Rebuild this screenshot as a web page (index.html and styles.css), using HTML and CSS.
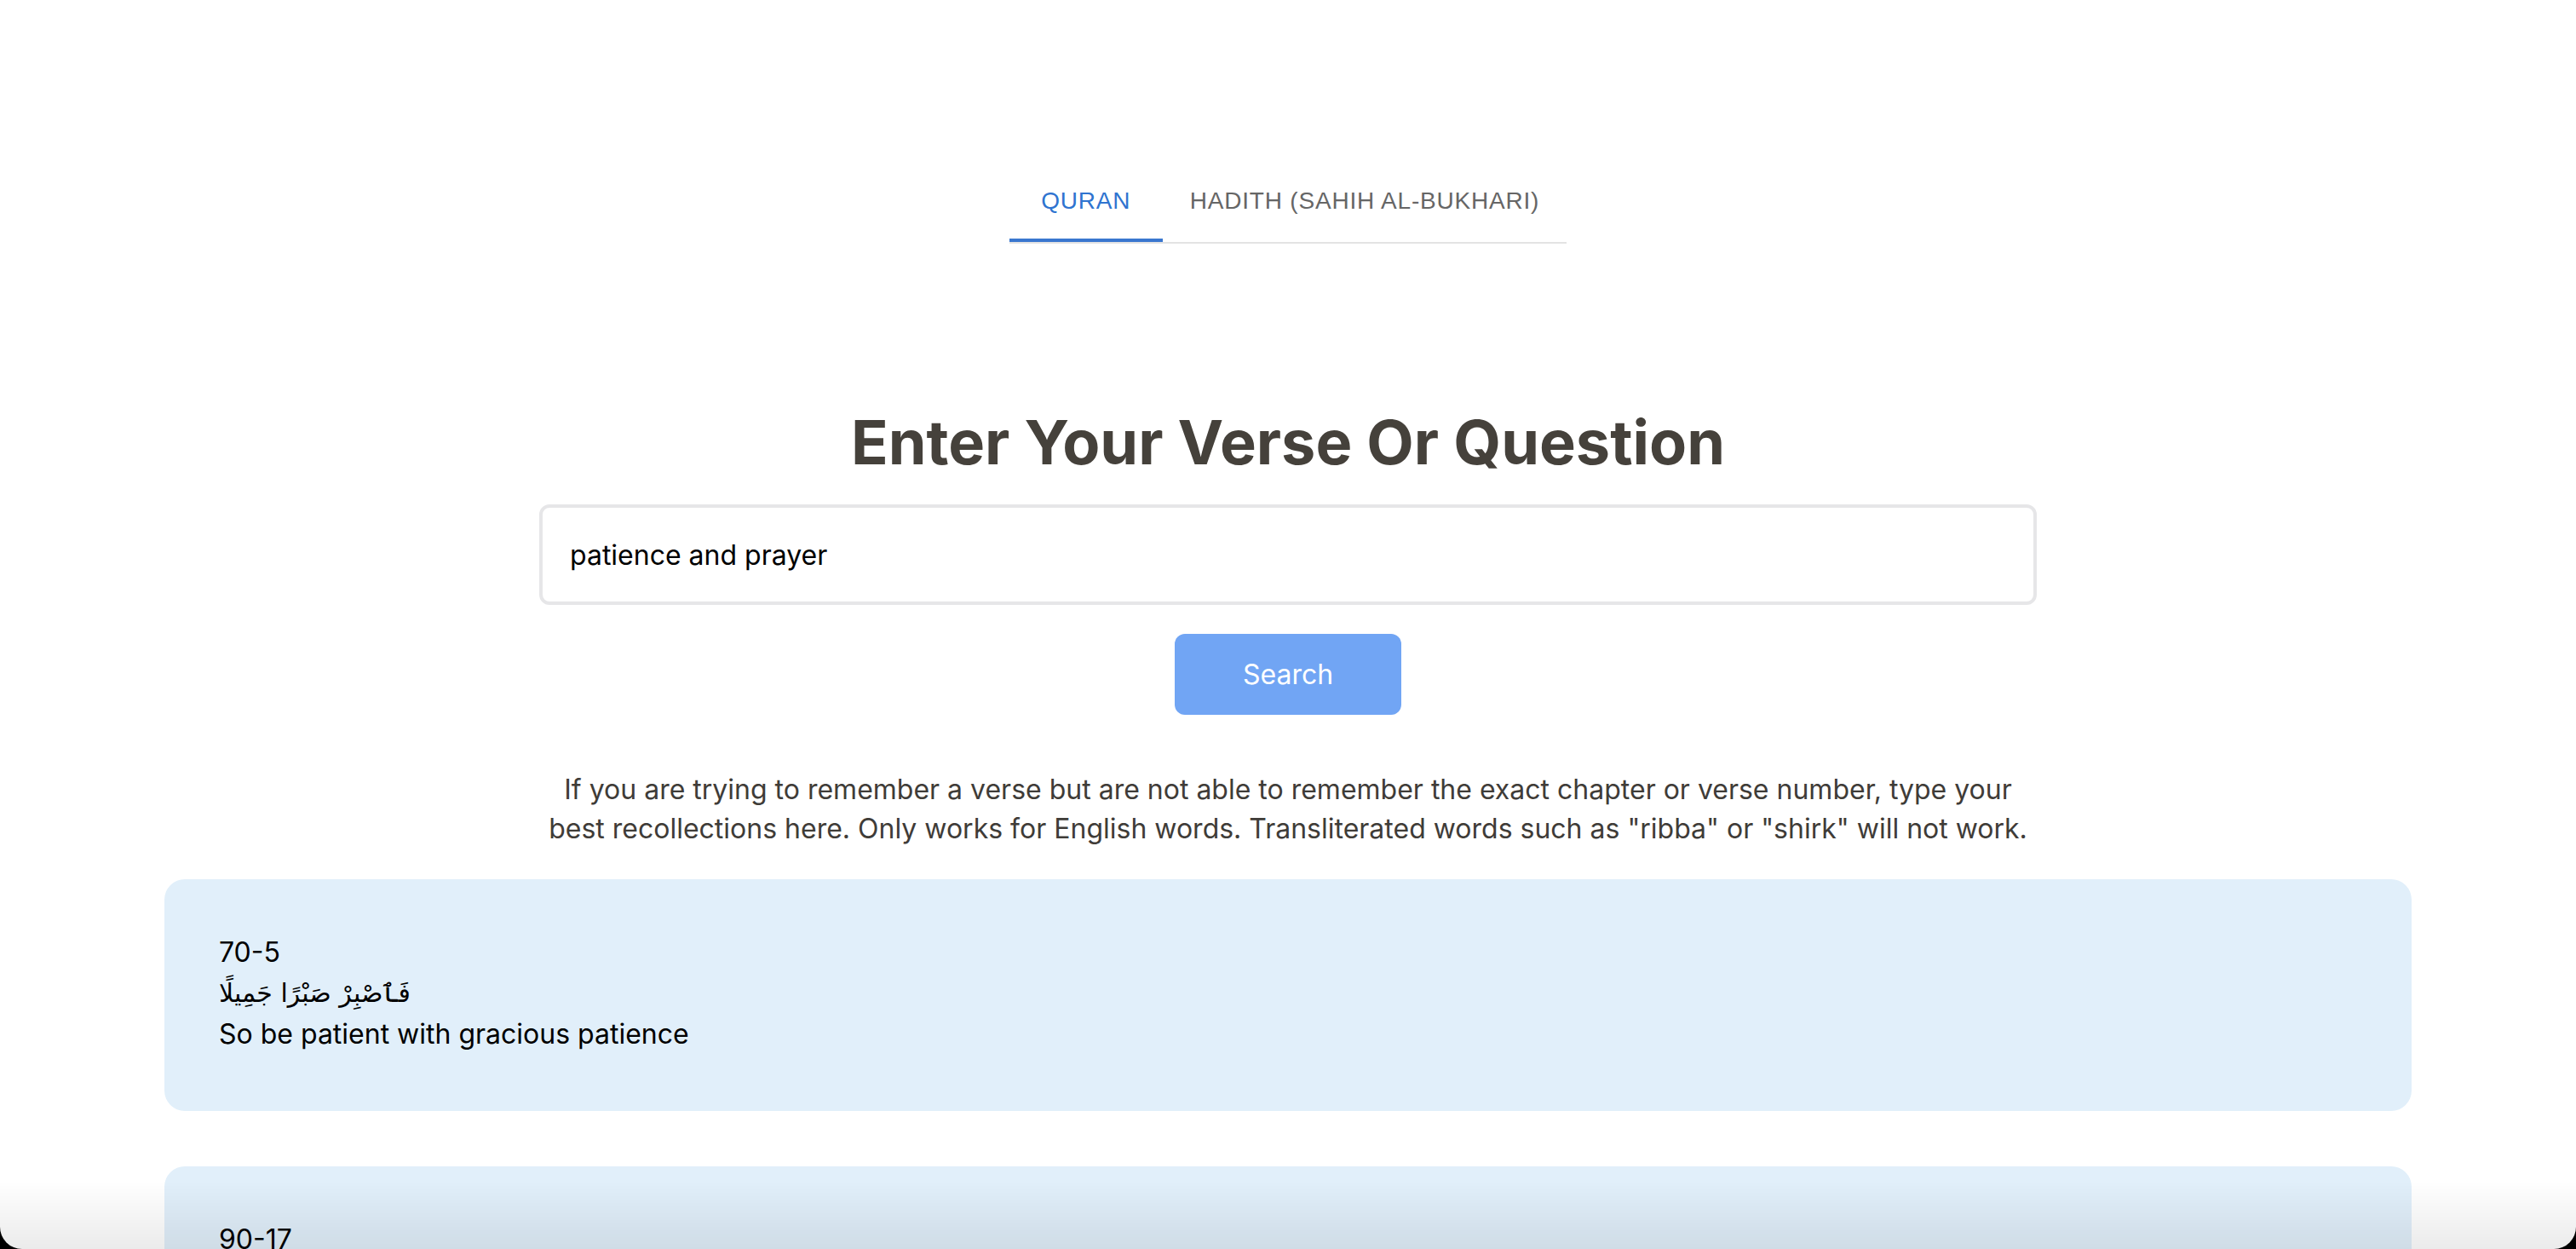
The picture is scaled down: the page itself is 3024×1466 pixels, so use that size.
FILE: index.html
```html
<!DOCTYPE html>
<html lang="en">
<head>
<meta charset="utf-8">
<title>Verse Search</title>
<link rel="stylesheet" href="styles.css">
</head>
<body>
<main class="page">
  <nav class="tabs">
    <button class="tab tab-active">Quran</button>
    <button class="tab">Hadith (Sahih Al-Bukhari)</button>
  </nav>

  <section class="search">
    <h1 class="title">Enter Your Verse Or Question</h1>
    <input class="query" type="text" value="patience and prayer">
    <button class="search-btn">Search</button>
    <p class="hint">If you are trying to remember a verse but are not able to remember the exact chapter or verse number, type your best recollections here. Only works for English words. Transliterated words such as "ribba" or "shirk" will not work.</p>
  </section>

  <section class="results">
    <article class="card">
      <div class="ref">70-5</div>
      <div class="arabic">فَٱصْبِرْ صَبْرًا جَمِيلًا</div>
      <div class="english">So be patient with gracious patience</div>
    </article>
    <article class="card">
      <div class="ref">90-17</div>
      <div class="arabic">ثُمَّ كَانَ مِنَ ٱلَّذِينَ ءَامَنُوا۟ وَتَوَاصَوْا۟ بِٱلصَّبْرِ وَتَوَاصَوْا۟ بِٱلْمَرْحَمَةِ</div>
      <div class="english">And then being among those who believed and advised one another to patience and advised one another to compassion</div>
    </article>
  </section>
</main>
<div class="window-frame"></div>
</body>
</html>
```

FILE: styles.css
```css
html {
  overflow: hidden;
  background: #fff;
}

body {
  margin: 0;
  font-family: Inter, "Noto Sans", "DejaVu Sans", sans-serif;
  color: #000;
  background: #fff;
}

.page {
  padding-top: 188px;
  display: flex;
  flex-direction: column;
  align-items: center;
}

/* Tabs */
.tabs {
  display: flex;
  border-bottom: 2px solid #e3e3e3;
}

.tab {
  min-width: 180px;
  height: 96px;
  padding: 4px 32px 0;
  margin: 0;
  border: 0;
  background: none;
  font-family: "Liberation Sans", Arial, sans-serif;
  font-size: 28px;
  font-weight: 400;
  letter-spacing: 0.8px;
  text-transform: uppercase;
  color: #666;
  box-sizing: border-box;
  border-bottom: 4px solid transparent;
}

.tab-active {
  color: #2f74d0;
  border-bottom-color: #3a77cf;
}

/* Search */
.search {
  width: 1758px;
  display: flex;
  flex-direction: column;
  align-items: center;
  margin-top: 189px;
}

.title {
  margin: 0;
  font-size: 72px;
  line-height: 88px;
  font-weight: 700;
  color: #45413b;
}

.query {
  margin-top: 29px;
  width: 100%;
  height: 118px;
  box-sizing: border-box;
  border: 4px solid #e6e6e8;
  border-radius: 12px;
  padding: 0 32px;
  font-family: Inter, sans-serif;
  font-size: 32px;
  color: #000;
  outline: none;
}

.search-btn {
  margin-top: 34px;
  width: 266px;
  height: 95px;
  border: 0;
  border-radius: 12px;
  background: #71a5f4;
  color: #fff;
  font-family: Inter, sans-serif;
  font-size: 32px;
  font-weight: 400;
}

.hint {
  margin: 65px 0 0;
  text-align: center;
  font-size: 32px;
  line-height: 46px;
  color: #3f3c38;
}

/* Results */
.results {
  width: 2638px;
  margin-top: 36px;
  display: flex;
  flex-direction: column;
  gap: 65px;
}

.card {
  background: #e1effa;
  border-radius: 24px;
  padding: 62px 64px 66px;
  font-size: 32px;
  line-height: 48px;
  color: #000;
}

.arabic {
  font-family: "DejaVu Sans", sans-serif;
  font-size: 30px;
  text-align: left;
}

/* Screenshot window edge: rounded bottom corners and bottom shade */
.window-frame {
  position: fixed;
  inset: 0;
  pointer-events: none;
  border-radius: 0 0 26px 26px;
  box-shadow: 0 0 0 60px #000;
  background: linear-gradient(to bottom, rgba(0, 0, 0, 0) calc(100% - 80px), rgba(0, 0, 0, 0.08) 100%);
}
```
